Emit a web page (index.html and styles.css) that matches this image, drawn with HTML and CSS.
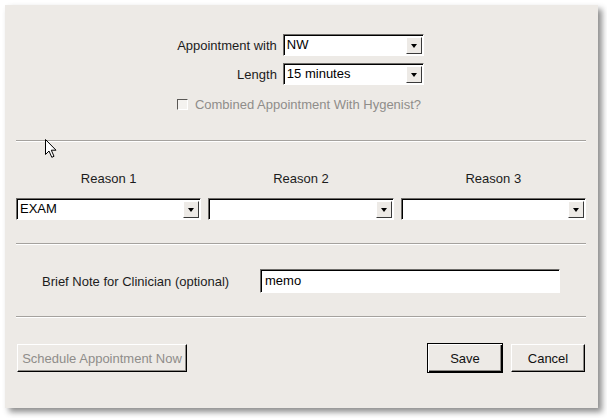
FILE: index.html
```html
<!DOCTYPE html>
<html>
<head>
<meta charset="utf-8">
<link rel="stylesheet" href="styles.css">
</head>
<body>
<div class="dialog">
  <div class="top">
    <div class="form-grid">
      <span class="lbl">Appointment with</span>
      <div class="combo"><span class="val">NW</span><span class="arrow"></span></div>
      <span class="lbl">Length</span>
      <div class="combo"><span class="val">15 minutes</span><span class="arrow"></span></div>
    </div>
    <div class="check-row">
      <span class="checkbox"></span>
      <span class="check-text">Combined Appointment With Hygenist?</span>
    </div>
  </div>
  <div class="sep sep-1"></div>
  <div class="reasons">
    <span class="rlabel">Reason 1</span>
    <span class="rlabel">Reason 2</span>
    <span class="rlabel">Reason 3</span>
    <div class="combo"><span class="val">EXAM</span><span class="arrow"></span></div>
    <div class="combo"><span class="val"></span><span class="arrow"></span></div>
    <div class="combo"><span class="val"></span><span class="arrow"></span></div>
  </div>
  <div class="sep sep-2"></div>
  <div class="note-row">
    <span class="note-label">Brief Note for Clinician (optional)</span>
    <div class="entry">memo</div>
  </div>
  <div class="sep sep-3"></div>
  <div class="buttons">
    <div class="btn btn-disabled">Schedule Appointment Now</div>
    <div class="spacer"></div>
    <div class="btn btn-default">Save</div>
    <div class="btn btn-cancel">Cancel</div>
  </div>
  <svg class="cursor" width="13" height="20" viewBox="0 0 13 20">
    <path d="M0.5 0.5 L0.5 15.5 L4 12 L6.8 18.3 L9 17.3 L6.3 11.2 L11 11.2 Z" fill="#fff" stroke="#000" stroke-width="1" stroke-linejoin="miter"/>
  </svg>
</div>
</body>
</html>
```
FILE: styles.css
```css
html, body {
  margin: 0;
  padding: 0;
  background: #ffffff;
}
body {
  font-family: "Liberation Sans", Arial, sans-serif;
  font-size: 13px;
  color: #1c1c1c;
  width: 607px;
  height: 418px;
  overflow: hidden;
}
.dialog {
  position: relative;
  margin: 5px 0 0 5px;
  width: 593px;
  height: 403px;
  background: #edeae6;
  box-shadow: 4px 4px 6px rgba(0, 0, 0, 0.45);
  box-sizing: border-box;
  padding: 0 12px 0 11px;
}
.top {
  padding-top: 29px;
  display: flex;
  flex-direction: column;
  align-items: center;
}
.form-grid {
  display: grid;
  grid-template-columns: auto 141px;
  grid-auto-rows: 22px;
  column-gap: 6px;
  row-gap: 7px;
  margin-right: 1px;
}
.lbl {
  justify-self: end;
  align-self: center;
  line-height: 15px;
}
.combo {
  display: flex;
  align-items: stretch;
  background: #ffffff;
  border-top: 1px solid #6e6c69;
  border-left: 1px solid #6e6c69;
  border-right: 1px solid #ffffff;
  border-bottom: 1px solid #ffffff;
  box-shadow: inset 1px 1px 0 #000000;
  box-sizing: border-box;
  height: 22px;
}
.val {
  flex: 1;
  padding-left: 3px;
  padding-top: 1px;
  line-height: 18px;
  font-size: 13px;
  color: #000;
}
.arrow {
  width: 16px;
  margin: 2px 1px 1px 0;
  background: #edeae6;
  border-left: 1px solid #ffffff;
  border-top: 1px solid #ffffff;
  border-right: 1px solid #3a3a3a;
  border-bottom: 1px solid #3a3a3a;
  box-sizing: border-box;
  display: flex;
  align-items: center;
  justify-content: center;
}
.arrow::after {
  content: "";
  width: 0;
  height: 0;
  border-left: 3.5px solid transparent;
  border-right: 3.5px solid transparent;
  border-top: 4px solid #000;
  margin-top: 1px;
}
.check-row {
  margin-top: 11px;
  height: 16px;
  display: flex;
  align-items: center;
  gap: 7px;
  margin-left: -4px;
}
.checkbox {
  width: 11px;
  height: 11px;
  box-sizing: border-box;
  border-top: 1px solid #5a5855;
  border-left: 1px solid #5a5855;
  border-right: 1px solid #ffffff;
  border-bottom: 1px solid #ffffff;
  background: #f4f2ef;
}
.check-text {
  color: #8f8d8a;
}
.sep {
  height: 1px;
  background: #a5a29e;
  border-bottom: 1px solid #ffffff;
}
.sep-1 { margin-top: 28px; }
.reasons {
  margin-top: 30px;
  display: grid;
  grid-template-columns: 1fr 1fr 1fr;
  grid-template-rows: 14px 22px;
  column-gap: 7px;
  row-gap: 12px;
}
.rlabel {
  text-align: center;
  line-height: 14px;
}
.sep-2 { margin-top: 23px; }
.note-row {
  margin-top: 24px;
  display: flex;
  align-items: center;
  height: 24px;
}
.note-label {
  margin-left: 26px;
  width: 218px;
  line-height: 15px;
}
.entry {
  width: 300px;
  height: 24px;
  box-sizing: border-box;
  background: #fff;
  border-top: 1px solid #6e6c69;
  border-left: 1px solid #6e6c69;
  border-right: 1px solid #ffffff;
  border-bottom: 1px solid #ffffff;
  box-shadow: inset 1px 1px 0 #000000;
  padding-left: 4px;
  line-height: 22px;
  color: #000;
}
.sep-3 { margin-top: 23px; }
.buttons {
  margin-top: 25px;
  display: flex;
  align-items: center;
  height: 30px;
}
.spacer { flex: 1; }
.btn {
  box-sizing: border-box;
  height: 28px;
  display: flex;
  align-items: center;
  justify-content: center;
  background: #edeae6;
  border-top: 1px solid #ffffff;
  border-left: 1px solid #ffffff;
  border-right: 1px solid #000000;
  border-bottom: 1px solid #000000;
  box-shadow: inset -1px -1px 0 #8e8b87;
  color: #111;
}
.btn-disabled {
  margin-left: 1px;
  width: 170px;
  color: #8f8d8a;
}
.btn-default {
  width: 76px;
  height: 30px;
  border: 1px solid #000000;
  box-shadow: inset 1px 1px 0 #ffffff, inset -1px -1px 0 #000000, inset -2px -2px 0 #8e8b87;
  margin-right: 8px;
}
.btn-cancel {
  width: 74px;
  margin-right: 1px;
}
.cursor {
  position: absolute;
  left: 40px;
  top: 134px;
}
```
